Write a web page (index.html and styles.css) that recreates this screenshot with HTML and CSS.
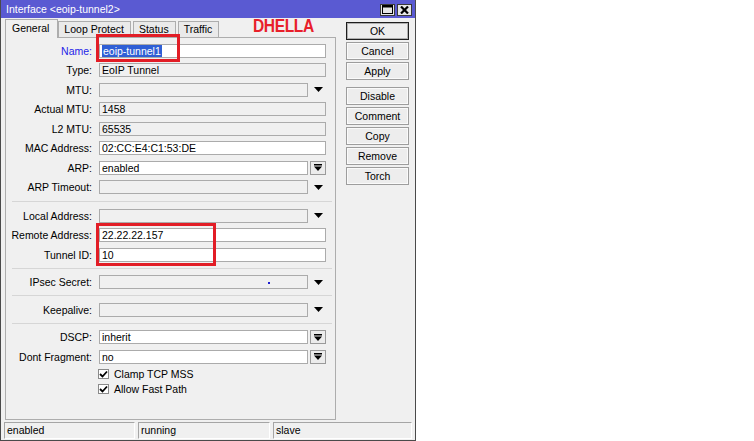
FILE: index.html
```html
<!DOCTYPE html>
<html>
<head>
<meta charset="utf-8">
<link rel="stylesheet" href="styles.css">
</head>
<body>
<div class="win">
  <div class="titlebar">
    <span class="title">Interface &lt;eoip-tunnel2&gt;</span>
    <div class="tbtns">
      <span class="tbtn"><svg width="11" height="9" viewBox="0 0 11 9"><rect x="0.5" y="0.5" width="10" height="8" fill="none" stroke="#000"/><rect x="0" y="0" width="11" height="2.5" fill="#000"/></svg></span>
      <span class="tbtn"><svg width="9" height="8" viewBox="0 0 9 8"><path d="M1 0.5L8 7.5M8 0.5L1 7.5" stroke="#000" stroke-width="2.2"/></svg></span>
    </div>
  </div>
  <div class="main">
    <div class="left">
      <div class="tabs">
        <div class="tab active">General</div>
        <div class="tab">Loop Protect</div>
        <div class="tab">Status</div>
        <div class="tab">Traffic</div>
      </div>
      <div class="panel">
        <div class="row"><span class="lbl blue">Name:</span><div class="fld w"><span class="sel">eoip-tunnel1</span></div></div>
        <div class="row"><span class="lbl">Type:</span><div class="fld g">EoIP Tunnel</div></div>
        <div class="row"><span class="lbl">MTU:</span><div class="fld g s"></div><span class="arr"><svg width="9" height="5" viewBox="0 0 9 5"><path d="M0 0H9L4.5 5Z" fill="#000"/></svg></span></div>
        <div class="row"><span class="lbl">Actual MTU:</span><div class="fld g">1458</div></div>
        <div class="row"><span class="lbl">L2 MTU:</span><div class="fld g">65535</div></div>
        <div class="row"><span class="lbl">MAC Address:</span><div class="fld w">02:CC:E4:C1:53:DE</div></div>
        <div class="row"><span class="lbl">ARP:</span><div class="fld w s">enabled</div><span class="abtn"><svg width="8" height="7" viewBox="0 0 8 7"><rect x="0" y="0" width="8" height="1.5" fill="#000"/><path d="M0 2.5H8L4 7Z" fill="#000"/></svg></span></div>
        <div class="row"><span class="lbl">ARP Timeout:</span><div class="fld g s"></div><span class="arr"><svg width="9" height="5" viewBox="0 0 9 5"><path d="M0 0H9L4.5 5Z" fill="#000"/></svg></span></div>
        <div class="sep first"></div>
        <div class="row"><span class="lbl">Local Address:</span><div class="fld g s"></div><span class="arr"><svg width="9" height="5" viewBox="0 0 9 5"><path d="M0 0H9L4.5 5Z" fill="#000"/></svg></span></div>
        <div class="row"><span class="lbl">Remote Address:</span><div class="fld w">22.22.22.157</div></div>
        <div class="row"><span class="lbl">Tunnel ID:</span><div class="fld w">10</div></div>
        <div class="sep"></div>
        <div class="row"><span class="lbl">IPsec Secret:</span><div class="fld g s"><span class="dot"></span></div><span class="arr"><svg width="9" height="5" viewBox="0 0 9 5"><path d="M0 0H9L4.5 5Z" fill="#000"/></svg></span></div>
        <div class="sep"></div>
        <div class="row"><span class="lbl">Keepalive:</span><div class="fld g s"></div><span class="arr"><svg width="9" height="5" viewBox="0 0 9 5"><path d="M0 0H9L4.5 5Z" fill="#000"/></svg></span></div>
        <div class="sep"></div>
        <div class="row"><span class="lbl">DSCP:</span><div class="fld w s">inherit</div><span class="abtn"><svg width="8" height="7" viewBox="0 0 8 7"><rect x="0" y="0" width="8" height="1.5" fill="#000"/><path d="M0 2.5H8L4 7Z" fill="#000"/></svg></span></div>
        <div class="row"><span class="lbl">Dont Fragment:</span><div class="fld w s">no</div><span class="abtn"><svg width="8" height="7" viewBox="0 0 8 7"><rect x="0" y="0" width="8" height="1.5" fill="#000"/><path d="M0 2.5H8L4 7Z" fill="#000"/></svg></span></div>
        <div class="crow"><span class="cb"><svg width="9" height="8" viewBox="0 0 9 8"><path d="M1 4L3.5 6.5L8 1.5" fill="none" stroke="#000" stroke-width="1.8"/></svg></span><span>Clamp TCP MSS</span></div>
        <div class="crow"><span class="cb"><svg width="9" height="8" viewBox="0 0 9 8"><path d="M1 4L3.5 6.5L8 1.5" fill="none" stroke="#000" stroke-width="1.8"/></svg></span><span>Allow Fast Path</span></div>
      </div>
    </div>
    <div class="btns">
      <div class="btn def">OK</div>
      <div class="btn">Cancel</div>
      <div class="btn gapafter">Apply</div>
      <div class="btn">Disable</div>
      <div class="btn">Comment</div>
      <div class="btn">Copy</div>
      <div class="btn">Remove</div>
      <div class="btn">Torch</div>
    </div>
  </div>
  <div class="statusbar">
    <div class="cell">enabled</div>
    <div class="cell">running</div>
    <div class="cell">slave</div>
  </div>
  <div class="brand">DHELLA</div>
  <div class="mark m1"></div>
  <div class="mark m2"></div>
</div>
</body>
</html>
```

FILE: styles.css
```css
html, body {
  margin: 0;
  padding: 0;
  background: #ffffff;
}
body {
  font-family: "Liberation Sans", Arial, sans-serif;
  font-size: 10.5px;
  color: #000;
}
.win {
  position: relative;
  width: 416px;
  height: 441px;
  box-sizing: border-box;
  border-left: 1px solid #4a4a4a;
  border-right: 1px solid #4a4a4a;
  border-bottom: 1px solid #4a4a4a;
  background: #f0f0f0;
  display: flex;
  flex-direction: column;
}
.titlebar {
  height: 18px;
  background: #5a5ad2;
  display: flex;
  align-items: center;
  justify-content: space-between;
  padding: 0 3px 0 5px;
  flex: none;
}
.title {
  color: #fff;
  line-height: 18px;
}
.tbtns {
  display: flex;
  gap: 2px;
  margin-top: 1px;
}
.tbtn {
  width: 15px;
  height: 12px;
  box-sizing: border-box;
  border: 1px solid #3a3a3a;
  background: #e6e6e6;
  display: flex;
  align-items: center;
  justify-content: center;
}
.main {
  display: flex;
  padding: 1px 6px 0 4px;
  flex: none;
}
.left {
  width: 331px;
  flex: none;
}
.tabs {
  display: flex;
  align-items: flex-end;
  height: 18px;
}
.tab {
  height: 16px;
  box-sizing: border-box;
  border: 1px solid #adadad;
  border-bottom: none;
  background: #eaeaea;
  padding: 0 6px 0 5px;
  line-height: 15px;
  margin-right: 2px;
}
.tab.active {
  height: 19px;
  margin-bottom: -1px;
  background: #f0f0f0;
  padding: 0 8px 0 6px;
  line-height: 16px;
  margin-right: 0;
}
.panel {
  height: 383px;
  box-sizing: border-box;
  border: 1px solid #adadad;
  padding-top: 2.75px;
}
.row {
  display: flex;
  align-items: center;
  height: 19.5px;
}
.lbl {
  width: 86px;
  text-align: right;
  margin-right: 7px;
  flex: none;
  white-space: nowrap;
}
.lbl.blue {
  color: #2424e8;
}
.fld {
  width: 227px;
  height: 14px;
  box-sizing: border-box;
  border: 1px solid #ababab;
  padding-left: 2px;
  line-height: 12px;
  white-space: nowrap;
  overflow: hidden;
  flex: none;
}
.fld.w { background: #fff; }
.fld.g { background: #f0f0f0; }
.fld.s { width: 209px; }
.sel {
  background: #2f5fd5;
  color: #fff;
  padding: 0 1px;
}
.dot {
  display: inline-block;
  width: 2px;
  height: 2px;
  background: #2020d0;
  margin-left: 166px;
  vertical-align: middle;
}
.arr {
  width: 16px;
  margin-left: 2px;
  display: flex;
  justify-content: center;
}
.abtn {
  width: 16px;
  height: 14px;
  margin-left: 2px;
  box-sizing: border-box;
  border: 1px solid #9a9a9a;
  background: #ececec;
  display: flex;
  align-items: center;
  justify-content: center;
}
.sep {
  height: 1px;
  background: #d6d6d6;
  margin: 3.5px 3px 3.5px 6px;
}
.sep.first {
  margin: 4px 3px 4px 6px;
}
.crow {
  display: flex;
  align-items: center;
  height: 15px;
  padding-left: 92px;
}
.cb {
  width: 11px;
  height: 10px;
  box-sizing: border-box;
  border: 1px solid #8a8a8a;
  background: #fff;
  display: flex;
  align-items: center;
  justify-content: center;
  margin-right: 5px;
}
.btns {
  width: 63px;
  margin-left: 10px;
  padding-top: 3px;
  flex: none;
}
.btn {
  height: 18px;
  box-sizing: border-box;
  border: 1px solid #9d9d9d;
  box-shadow: inset 0 0 0 1px #fafafa;
  background: #ededed;
  text-align: center;
  line-height: 16px;
  margin-bottom: 2px;
}
.btn.def {
  border-color: #1e1e1e;
  box-shadow: inset 0 0 0 1px #b0b0b0;
}
.btn.gapafter {
  margin-bottom: 7px;
}
.statusbar {
  display: grid;
  grid-template-columns: 131px 132px 139px;
  column-gap: 3px;
  padding: 2px 0 0 3px;
}
.cell {
  height: 17px;
  box-sizing: border-box;
  border-top: 1px solid #a5a5a5;
  border-left: 1px solid #a5a5a5;
  border-bottom: 1px solid #ffffff;
  border-right: 1px solid #ffffff;
  padding-left: 2px;
  line-height: 15px;
}
.brand {
  position: absolute;
  left: 252px;
  top: 16px;
  color: #e8202a;
  font-family: "Liberation Sans", Arial, sans-serif;
  font-weight: bold;
  font-size: 19px;
  line-height: 1;
  letter-spacing: -0.5px;
  transform: scaleX(0.82);
  transform-origin: left top;
}
.mark {
  position: absolute;
  border: 3px solid #e21d26;
  box-sizing: border-box;
}
.m1 {
  left: 95px;
  top: 34px;
  width: 84px;
  height: 28px;
}
.m2 {
  left: 95px;
  top: 223px;
  width: 120px;
  height: 43px;
}
```
